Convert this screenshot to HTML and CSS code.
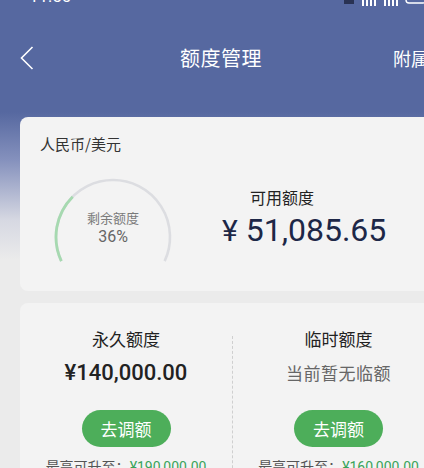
FILE: index.html
```html
<!DOCTYPE html>
<html lang="zh-CN">
<head>
<meta charset="utf-8">
<title>额度管理</title>
<link rel="stylesheet" href="styles.css">
</head>
<body>
<div class="page">
  <header class="header">
    <div class="status">
      <span class="time">11:50</span>
      <span class="icons">
        <svg width="86" height="14" viewBox="0 0 86 14">
          <rect x="2" y="0" width="10" height="12" fill="#1e2440" opacity="0.8"/>
          <rect x="20" y="2" width="2" height="12" fill="#fff"/>
          <rect x="24" y="0" width="2" height="14" fill="#fff"/>
          <rect x="28" y="0" width="2" height="14" fill="#fff"/>
          <rect x="32" y="0" width="2" height="14" fill="#fff"/>
          <rect x="42" y="2" width="2" height="12" fill="#fff"/>
          <rect x="46" y="0" width="2" height="14" fill="#fff"/>
          <rect x="50" y="0" width="2" height="14" fill="#fff"/>
          <rect x="54" y="0" width="2" height="14" fill="#fff"/>
          <rect x="64" y="-4" width="20" height="15" rx="3" fill="none" stroke="#fff" stroke-width="1.4"/>
        </svg>
      </span>
    </div>
    <nav class="nav">
      <span class="back">
        <svg width="14" height="24" viewBox="0 0 14 24"><polyline points="12.5,1 1.5,12 12.5,23" fill="none" stroke="#fff" stroke-width="1.6" stroke-linejoin="miter"/></svg>
      </span>
      <h1 class="title">额度管理</h1>
      <span class="extra">附属卡</span>
    </nav>
  </header>

  <section class="card summary">
    <div class="currency">人民币/美元</div>
    <div class="summary-row">
      <div class="gauge">
        <svg class="gauge-svg" width="120" height="95" viewBox="0 0 120 95">
          <path d="M 8.34 86.09 A 57 57 0 1 1 111.66 86.09" fill="none" stroke="#dcdde1" stroke-width="2.6"/>
          <path d="M 8.34 86.09 A 57 57 0 0 1 19.7 21.7" fill="none" stroke="#a6d9b0" stroke-width="2.8"/>
        </svg>
        <div class="gauge-text">
          <div class="gauge-label">剩余额度</div>
          <div class="gauge-value">36%</div>
        </div>
      </div>
      <div class="available">
        <div class="available-label">可用额度</div>
        <div class="available-amount"><span class="yen">¥</span> 51,085.65</div>
      </div>
    </div>
  </section>

  <section class="card limits">
    <div class="limit-col">
      <div class="limit-title">永久额度</div>
      <div class="limit-amount">¥140,000.00</div>
      <button class="adjust">去调额</button>
      <div class="max">最高可升至：<span class="max-amount">¥190,000.00</span></div>
    </div>
    <div class="divider"></div>
    <div class="limit-col">
      <div class="limit-title">临时额度</div>
      <div class="limit-none">当前暂无临额</div>
      <button class="adjust">去调额</button>
      <div class="max">最高可升至：<span class="max-amount">¥160,000.00</span></div>
    </div>
  </section>
</div>
</body>
</html>
```
FILE: styles.css
```css
* { box-sizing: border-box; }
html, body { margin: 0; padding: 0; }
body {
  width: 424px;
  height: 468px;
  overflow: hidden;
  font-family: "Noto Sans CJK SC", "Noto Sans", sans-serif;
  background: linear-gradient(to bottom, #5668a0 0px, #5668a0 112px, #8591bd 160px, #d6d8e2 220px, #ebebeb 260px, #ebebeb 100%);
}
.page { width: 424px; height: 468px; overflow: hidden; }
.header { height: 117px; }
.status {
  height: 8px;
  overflow: hidden;
  display: flex;
  justify-content: space-between;
  align-items: flex-end;
  padding: 0 0 0 29px;
  color: #fff;
}
.time { font-family: Roboto, sans-serif; font-size: 17px; line-height: 20px; display: block; margin-bottom: 2px; }
.icons { display: block; margin-bottom: 2px; margin-right: -4px; }
.icons svg { display: block; }
.nav {
  margin-top: 28px;
  height: 44px;
  display: grid;
  grid-template-columns: minmax(0, 1fr) auto minmax(0, 1fr);
  align-items: center;
  padding-left: 18px;
  color: #fff;
}
.back { display: flex; align-items: center; margin-left: 2px; }
.back svg { display: block; }
.title { margin: 0; font-size: 20px; font-weight: 400; line-height: 28px; letter-spacing: 0.5px; }
.extra { font-size: 18px; line-height: 24px; margin-left: 131px; white-space: nowrap; overflow: hidden; }

.card {
  margin-left: 20px;
  width: 424px;
  background: #f3f3f3;
  border-radius: 8px;
}
.summary { height: 174px; padding: 16px 20px 0; }
.currency { font-size: 15px; line-height: 22px; color: #333; }
.summary-row { display: flex; margin-top: 20px; }
.gauge { display: grid; width: 120px; margin-left: 13px; }
.gauge-svg, .gauge-text { grid-area: 1 / 1; }
.gauge-svg { display: block; }
.gauge-text { text-align: center; padding-top: 34px; }
.gauge-label { font-size: 13px; line-height: 18px; color: #7a7a7a; }
.gauge-value { font-family: Roboto, sans-serif; font-size: 16px; line-height: 20px; color: #666; }
.available { margin-left: 49px; padding-top: 11px; }
.available-label { font-size: 16px; line-height: 22px; color: #222; margin-left: 28px; }
.available-amount {
  margin-top: 4px;
  font-family: Roboto, sans-serif;
  font-size: 32px;
  line-height: 36px;
  color: #1d2747;
  white-space: nowrap;
}
.yen { font-size: 30px; }

.limits {
  margin-top: 12px;
  height: 200px;
  display: grid;
  grid-template-columns: 212px 1px 211px;
}
.limit-col { display: flex; flex-direction: column; align-items: center; padding-top: 24px; }
.divider { margin-top: 33px; border-left: 1px dashed #cfcfcf; }
.limit-title { font-size: 17px; line-height: 24px; color: #222; }
.limit-amount {
  margin-top: 7px;
  font-family: Roboto, sans-serif;
  font-size: 22px;
  font-weight: 500;
  line-height: 30px;
  color: #222;
}
.limit-none { margin-top: 7px; font-size: 17px; line-height: 30px; color: #666; letter-spacing: 0.5px; }
.adjust {
  margin-top: 22px;
  width: 89px;
  height: 37px;
  border: none;
  border-radius: 19px;
  background: #4dae5a;
  color: #fff;
  font-family: "Noto Sans CJK SC", sans-serif;
  font-size: 17px;
  padding: 0;
}
.max { margin-top: 9px; font-size: 14px; line-height: 20px; color: #555; white-space: nowrap; }
.max-amount { font-family: Roboto, sans-serif; color: #3aa35a; }
```
